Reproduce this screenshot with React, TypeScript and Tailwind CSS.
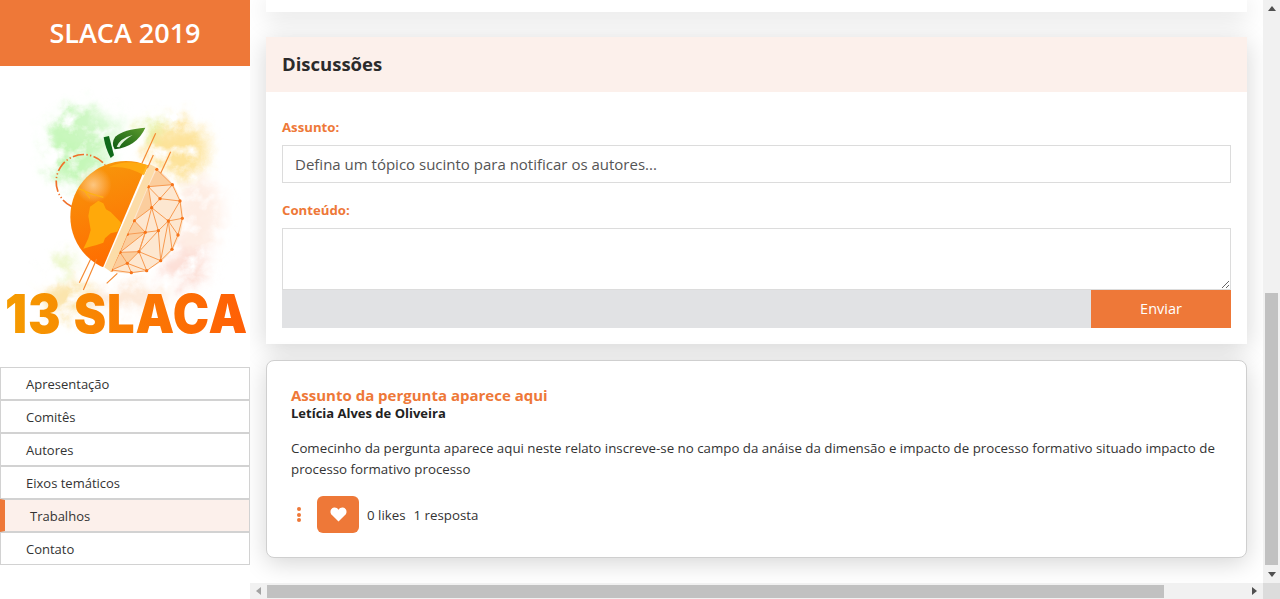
import React from "react";

const font = { fontFamily: '"Open Sans", "Noto Sans", sans-serif' };

function Logo() {
  const pts: Record<string, [number, number]> = {
    A: [350, 238], B: [397, 284], C: [420, 333], D: [427, 385], E: [414, 435], F: [396, 478], G: [362, 512],
    H: [320, 542], I: [274, 548], J: [215, 540], K: [240, 487], L: [262, 433], M: [283, 392], N: [325, 290],
    O: [360, 326], P: [335, 353], Q: [385, 393], R: [355, 422], S: [316, 427], T: [297, 485], U: [262, 520],
  };
  const edges = "AB BC CD DE EF FG GH HI IJ NB NO OB OC OP PN PM PQ QC QD QE QR RP RS SP SM SL SK ST RT RG QF QG LK KT TS TG TH TU UK UJ UI UH KJ ML".split(" ");
  const shaded = [
    [pts.A, pts.B, pts.N],
    [pts.N, pts.P, pts.M],
    [pts.L, pts.M, pts.S],
    [pts.K, pts.L, pts.S],
    [pts.K, pts.U, pts.T],
    [pts.J, pts.K, pts.U],
  ];
  return (
    <svg width="250" height="284" viewBox="0 0 250 284" className="block">
      <defs>
        <filter id="wc" x="-40%" y="-40%" width="180%" height="180%">
          <feGaussianBlur in="SourceGraphic" stdDeviation="7" result="b" />
          <feTurbulence type="fractalNoise" baseFrequency="0.05" numOctaves="5" seed="11" result="n" />
          <feDisplacementMap in="b" in2="n" scale="30" xChannelSelector="R" yChannelSelector="G" result="d" />
          <feColorMatrix in="n" type="matrix" values="0 0 0 0 0  0 0 0 0 0  0 0 0 0 0  3 0 0 0 -0.55" result="m" />
          <feComposite in="d" in2="m" operator="in" />
        </filter>
        <linearGradient id="orange" x1="0" y1="0" x2="0.3" y2="1">
          <stop offset="0" stopColor="#f79a0c" />
          <stop offset="1" stopColor="#ff6a00" />
        </linearGradient>
        <linearGradient id="title" x1="0" y1="0" x2="1" y2="0">
          <stop offset="0" stopColor="#f59c00" />
          <stop offset="1" stopColor="#ff5e06" />
        </linearGradient>
        <linearGradient id="leaf" x1="0" y1="1" x2="1" y2="0">
          <stop offset="0" stopColor="#0f5a12" />
          <stop offset="1" stopColor="#5d9c2e" />
        </linearGradient>
        <radialGradient id="shine">
          <stop offset="0" stopColor="#ffe4c0" stopOpacity="0.65" />
          <stop offset="1" stopColor="#ffe4c0" stopOpacity="0" />
        </radialGradient>
        <clipPath id="half">
          <path d="M330 200 L190 530 L60 560 L60 200 Z" />
        </clipPath>
        <clipPath id="half2">
          <path d="M345 225 L210 545 L440 570 L440 225 Z" />
        </clipPath>
      </defs>
      <g filter="url(#wc)">
        <ellipse cx="78" cy="82" rx="30" ry="40" fill="#b6f5a8" opacity="0.8" />
        <ellipse cx="98" cy="62" rx="26" ry="18" fill="#d2f8c8" opacity="0.7" />
        <ellipse cx="178" cy="84" rx="30" ry="30" fill="#fde08f" opacity="0.9" />
        <ellipse cx="200" cy="150" rx="22" ry="38" fill="#fde6d8" opacity="0.7" />
        <ellipse cx="185" cy="200" rx="22" ry="20" fill="#fdd8ce" opacity="0.8" />
        <ellipse cx="72" cy="232" rx="24" ry="18" fill="#fbe2a4" opacity="0.9" />
        <ellipse cx="130" cy="232" rx="40" ry="10" fill="#fde0c8" opacity="0.8" />
        <ellipse cx="152" cy="62" rx="12" ry="7" fill="#dff090" opacity="1" />
        <ellipse cx="64" cy="200" rx="10" ry="7" fill="#dcf09a" opacity="0.9" />
      </g>
      <g transform="translate(40 24) scale(0.33333)">
        <path d="M96 350 A82 82 0 1 1 195 225" fill="none" stroke="#f0702a" strokeWidth="5" strokeDasharray="34 7 4 7 4 7" />
        <circle cx="258" cy="380" r="167" fill="url(#orange)" clipPath="url(#half)" />
        <path d="M205 232 Q260 205 326 226 L312 256 Q260 225 205 232Z" fill="#ffad12" opacity="0.9" />
        <circle cx="160" cy="285" r="55" fill="url(#shine)" clipPath="url(#half)" />
        <path d="M150 350 L165 340 L175 332 L190 340 L198 358 L212 366 L245 400 L232 425 L212 430 L195 445 L190 458 L170 465 L150 470 L130 476 L145 445 L152 420 L145 378Z" fill="#ffa90a" />
        <path d="M115 295 L150 310 L190 322 M130 298 L150 325" stroke="#ffb014" strokeWidth="4" fill="none" />
        <circle cx="258" cy="380" r="171" fill="#fde7d0" clipPath="url(#half2)" />
        {shaded.map((s, i) => (
          <polygon key={i} points={s.map((p) => p.join(",")).join(" ")} fill="#f9c48c" opacity="0.75" />
        ))}
        {edges.map((e) => {
          const a = pts[e[0]];
          const b = pts[e[1]];
          return <line key={e} x1={a[0]} y1={a[1]} x2={b[0]} y2={b[1]} stroke="#f79a50" strokeWidth="3" />;
        })}
        {Object.values(pts).map((p, i) => (
          <circle key={i} cx={p[0]} cy={p[1]} r="5" fill="#f7751a" />
        ))}
        <path d="M328 222 L193 532 L213 546 L348 232Z" fill="#fcdca8" />
        <path d="M347 130 L306 220 M340 195 L322 235 M392 185 L362 250 M152 507 L118 578 M170 507 L130 600 M232 550 L200 580" stroke="#f58a32" strokeWidth="3.5" fill="none" />
        <path d="M191 142 L207 138 L222 196 L212 204 Q196 175 191 142Z" fill="#0f6a1a" />
        <path d="M316 113 Q250 118 226 140 Q212 160 224 178 Q290 170 316 113Z" fill="url(#leaf)" />
        <path d="M230 170 Q240 145 278 135 Q245 155 238 172Z" fill="#e4f4df" />
      </g>
      <text transform="translate(5 267) scale(0.91 1)" fontFamily='"Inter", sans-serif' fontWeight="900" fontSize="53.5" letterSpacing="1" wordSpacing="2" fill="url(#title)">
        13 SLACA
      </text>
    </svg>
  );
}

const nav = ["Apresentação", "Comitês", "Autores", "Eixos temáticos", "Trabalhos", "Contato"];

export default function App() {
  return (
    <div className="flex h-[599px] w-[1280px] overflow-hidden bg-white text-[#333]" style={font}>
      <aside className="w-[250px] shrink-0 bg-white relative z-10">
        <div className="h-[66px] pt-px bg-[#ee7838] flex items-center justify-center text-white text-[27px] font-semibold">SLACA 2019</div>
        <Logo />
        <nav className="mt-[17px]">
          {nav.map((n) =>
            n === "Trabalhos" ? (
              <div key={n} className="h-[33px] pt-[2px] flex items-center border border-[#d2d2d2] border-l-[5px] border-l-[#ee7838] bg-[#fcf0eb] pl-[25px] text-[13px] text-[#333]">{n}</div>
            ) : (
              <div key={n} className="h-[33px] pt-[2px] flex items-center border border-[#d2d2d2] pl-[25px] text-[13px] text-[#333]">{n}</div>
            )
          )}
        </nav>
      </aside>

      <div className="flex-1 flex flex-col min-w-0">
        <main className="flex-1 min-h-0 overflow-hidden px-4">
          <div className="h-3 w-[981px] bg-white shadow-[0_5px_24px_rgba(0,0,0,0.17)]" />
          <section className="mt-[25px] w-[981px] bg-white shadow-[0_5px_24px_rgba(0,0,0,0.17)]">
            <div className="h-[55px] pb-px bg-[#fcf0eb] flex items-center pl-4 text-[18.5px] font-bold text-[#2b2b2b]">Discussões</div>
            <div className="px-4 pt-[26px] pb-4">
              <label className="block text-[13.2px] font-bold text-[#ee7838] leading-[18px]">Assunto:</label>
              <input
                className="mt-[9px] block w-[949px] h-[38px] border border-[#dcdcdc] px-3 text-[15px] outline-none placeholder:text-[#555]"
                style={font}
                placeholder="Defina um tópico sucinto para notificar os autores..."
              />
              <label className="mt-[18px] block text-[13.2px] font-bold text-[#ee7838] leading-[18px]">Conteúdo:</label>
              <textarea className="mt-[9px] block w-[949px] h-[62px] border border-[#dcdcdc] outline-none" />
              <div className="w-[949px] h-[38px] bg-[#e1e2e4] flex justify-end">
                <button className="w-[140px] h-[38px] bg-[#ee7838] text-white text-[14.5px]">Enviar</button>
              </div>
            </div>
          </section>
          <article className="mt-4 w-[981px] h-[198px] bg-white border border-[#cfcfcf] rounded-lg shadow-[0_5px_24px_rgba(0,0,0,0.17)] pl-6 pr-6 pt-[24px]">
            <h3 className="text-[15px] font-bold text-[#ee7838] leading-[20px]">Assunto da pergunta aparece aqui</h3>
            <p className="text-[13px] font-bold text-[#222] leading-[16px]">Letícia Alves de Oliveira</p>
            <p className="mt-[17px] text-[13.3px] leading-[21px] text-[#333]">
              Comecinho da pergunta aparece aqui neste relato inscreve-se no campo da anáise da dimensão e impacto de processo formativo situado impacto de processo formativo processo
            </p>
            <div className="mt-[16px] flex items-center h-[37px]">
              <span className="w-[26px] flex flex-col items-start gap-[1.5px] pl-[6px]">
                <i className="block w-1 h-1 rounded-full bg-[#ee7838]" />
                <i className="block w-1 h-1 rounded-full bg-[#ee7838]" />
                <i className="block w-1 h-1 rounded-full bg-[#ee7838]" />
              </span>
              <span className="w-[42px] h-[37px] rounded-md bg-[#ee7838] flex items-center justify-center">
                <svg width="17" height="15" viewBox="0 0 18 16"><path d="M9 15.5 L2 8.6 C-0.6 6 0.2 1.8 3.4 0.8 C5.6 0.1 7.8 1 9 3 C10.2 1 12.4 0.1 14.6 0.8 C17.8 1.8 18.6 6 16 8.6Z" fill="#fff" /></svg>
              </span>
              <span className="ml-2 pt-[2px] text-[13.3px] text-[#333]">0 likes</span>
              <span className="ml-2 pt-[2px] text-[13.3px] text-[#333]">1 resposta</span>
            </div>
          </article>
        </main>
        <div className="h-4 shrink-0 bg-[#f1f1f1] flex items-center relative">
          <span className="w-[17px] flex justify-center"><svg width="5" height="8" viewBox="0 0 5 8"><path d="M5 0V8L0 4Z" fill="#a3a3a3" /></svg></span>
          <div className="w-[897px] h-[13px] bg-[#c1c1c1]" />
          <span className="ml-auto w-[17px] flex justify-center"><svg width="5" height="8" viewBox="0 0 5 8"><path d="M0 0V8L5 4Z" fill="#505050" /></svg></span>
        </div>
      </div>

      <div className="w-[17px] shrink-0 flex flex-col bg-[#f1f1f1]">
        <div className="h-[17px] flex items-center justify-center"><svg width="8" height="5" viewBox="0 0 8 5"><path d="M0 5H8L4 0Z" fill="#505050" /></svg></div>
        <div className="mt-[276px] mx-[2px] h-[272px] bg-[#c1c1c1]" />
        <div className="mt-auto">
          <div className="h-[17px] flex items-center justify-center"><svg width="8" height="5" viewBox="0 0 8 5"><path d="M0 0H8L4 5Z" fill="#505050" /></svg></div>
          <div className="h-4 bg-[#dcdcdc]" />
        </div>
      </div>
    </div>
  );
}
